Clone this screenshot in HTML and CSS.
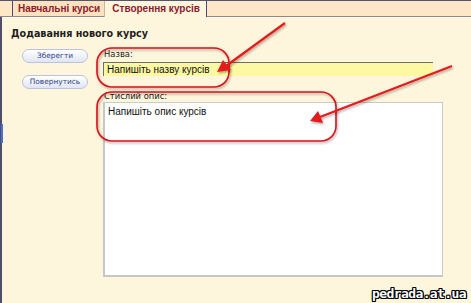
FILE: index.html
```html
<!DOCTYPE html>
<html lang="uk">
<head>
<meta charset="utf-8">
<title>Створення курсів</title>
<link rel="stylesheet" href="styles.css">
</head>
<body>
<div class="page">
  <div class="tabbar">
    <div class="tab">Навчальні курси</div>
    <div class="tab active">Створення курсів</div>
  </div>
  <div class="content">
    <h1 class="title">Додавання нового курсу</h1>
    <div class="main">
      <div class="actions">
        <button class="btn">Зберегти</button>
        <button class="btn">Повернутись</button>
      </div>
      <div class="form">
        <div class="lbl">Назва:</div>
        <div class="input">Напишіть назву курсів</div>
        <div class="lbl lbl2">Стислий опис:</div>
        <div class="textarea">Напишіть опис курсів</div>
      </div>
    </div>
  </div>
  <div class="sidemark"></div>
  <svg class="annot" width="471" height="303" viewBox="0 0 471 303">
    <defs>
      <filter id="sh" x="-10%" y="-10%" width="120%" height="120%">
        <feDropShadow dx="1" dy="1.5" stdDeviation="1" flood-color="#000" flood-opacity="0.35"/>
      </filter>
    </defs>
    <g filter="url(#sh)" fill="none" stroke="#d8141a" stroke-width="1.6">
      <rect x="97" y="48" width="132" height="39" rx="15" ry="15"/>
      <rect x="97" y="92" width="239" height="49" rx="15" ry="15"/>
    </g>
    <g filter="url(#sh)">
      <line x1="285" y1="23" x2="226" y2="66" stroke="#e31b1b" stroke-width="2.2"/>
      <polygon points="217,72 223,60 231,70" fill="#e31b1b"/>
      <line x1="452" y1="66" x2="320" y2="117" stroke="#e31b1b" stroke-width="2.2"/>
      <polygon points="310,121 318,111 323,123" fill="#e31b1b"/>
    </g>
  </svg>
  <div class="watermark">pedrada.at.ua</div>
</div>
</body>
</html>
```
FILE: styles.css
```css
html, body {
  margin: 0;
  padding: 0;
}
body {
  width: 471px;
  height: 303px;
  overflow: hidden;
  background: #fdf5dc;
  font-family: "DejaVu Sans", Verdana, sans-serif;
}
.page {
  position: relative;
  width: 471px;
  height: 303px;
  background: #fdf5dc;
}
.tabbar {
  display: flex;
  height: 15px;
  padding-left: 12px;
  background: #fde7c7;
  border-top: 1px solid #55556e;
  border-bottom: 1px solid #8a8a92;
}
.tab {
  height: 15px;
  padding: 0 4px 0 5px;
  font-family: "Liberation Sans", Arial, sans-serif;
  font-size: 10px;
  font-weight: bold;
  line-height: 15px;
  color: #8e1a2e;
  background: #fde2bf;
  border-left: 1px solid #4a4a80;
  border-right: 1px solid #4a4a80;
}
.tab.active {
  background: #fdf5dc;
  height: 16px;
  padding: 0 6px 0 7px;
  border-left: 1px solid #c8b8a0;
  margin-left: -1px;
}
.content {
  border-left: 2px solid #4e4e68;
  height: 287px;
  padding-left: 9px;
}
.title {
  margin: 0;
  padding-top: 11px;
  font-size: 9.6px;
  line-height: 12px;
  font-weight: bold;
  color: #1e1e1e;
}
.main {
  display: flex;
  margin-top: 8px;
}
.actions {
  display: flex;
  flex-direction: column;
  gap: 12px;
  width: 66px;
  margin-left: 11px;
  padding-top: 1px;
}
.btn {
  width: 66px;
  height: 14px;
  padding: 0;
  font-family: "DejaVu Sans", Verdana, sans-serif;
  font-size: 7.4px;
  line-height: 12px;
  color: #34448a;
  background: linear-gradient(#ffffff, #dfe5f3);
  border: 1px solid #bcc4dc;
  border-radius: 7px;
}
.form {
  margin-left: 15px;
  display: flex;
  flex-direction: column;
}
.lbl {
  height: 12px;
  font-size: 8.4px;
  line-height: 12px;
  color: #222;
  padding-left: 1px;
}
.input {
  width: 326px;
  height: 13px;
  margin-top: 2px;
  background: #fdf9a2;
  border-top: 1px solid #6e6e6e;
  border-left: 1px solid #6e6e6e;
  padding-left: 3px;
  font-family: "Liberation Sans", Arial, sans-serif;
  font-size: 10px;
  line-height: 13px;
  color: #111;
}
.lbl2 {
  margin-top: 14px;
}
.textarea {
  width: 334px;
  height: 169px;
  margin-top: 0;
  background: #ffffff;
  border: 1px solid #c6cccc;
  border-left: 2px solid #c3c9c9;
  border-bottom: 2px solid #c3c9c9;
  padding: 3px 0 0 3px;
  font-family: "Liberation Sans", Arial, sans-serif;
  font-size: 10px;
  line-height: 12px;
  color: #111;
}
.sidemark {
  position: absolute;
  left: 1px;
  top: 124px;
  width: 2px;
  height: 19px;
  background: #4a6fd0;
}
.annot {
  position: absolute;
  left: 0;
  top: 0;
  pointer-events: none;
}
.watermark {
  position: absolute;
  right: 5px;
  bottom: 3px;
  font-family: "DejaVu Sans Mono", monospace;
  font-weight: bold;
  font-size: 13px;
  line-height: 13px;
  letter-spacing: -0.6px;
  color: #ffffff;
  text-shadow: 1px 0 0 #000, -1px 0 0 #000, 0 1px 0 #000, 0 -1px 0 #000,
    1px 1px 0 #000, -1px -1px 0 #000, 1px -1px 0 #000, -1px 1px 0 #000;
}
```
